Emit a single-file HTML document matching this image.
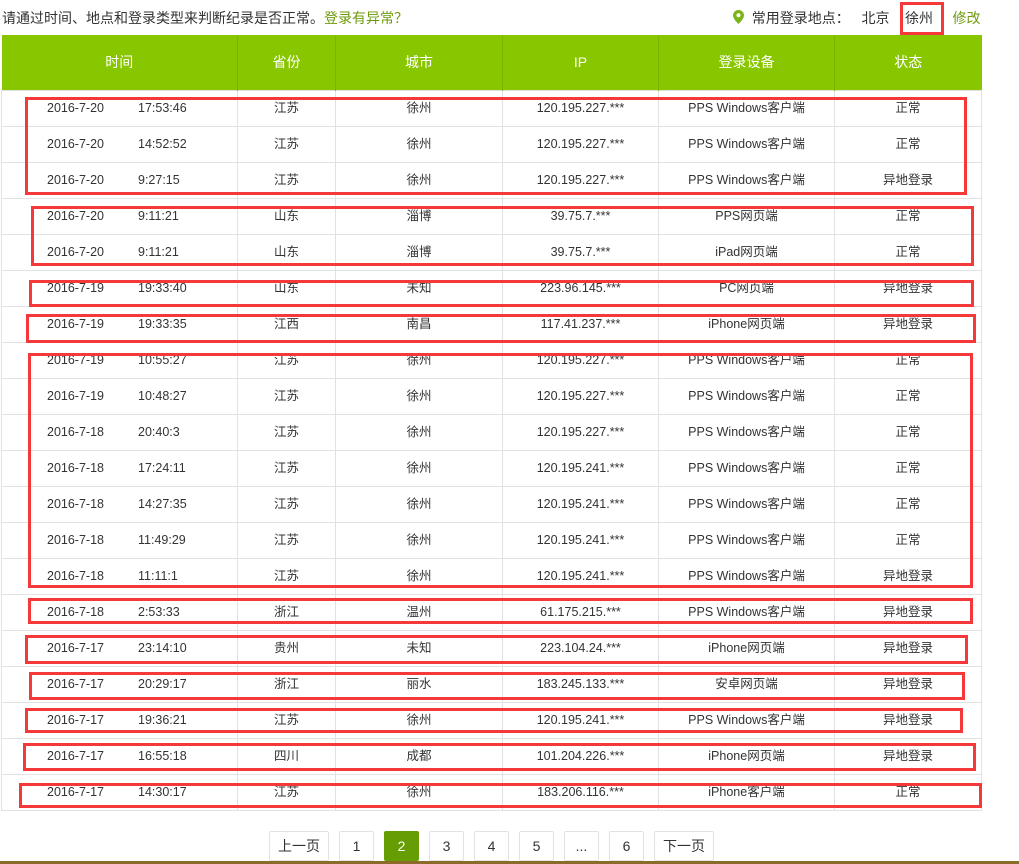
<!DOCTYPE html>
<html><head><meta charset="utf-8"><style>
*{margin:0;padding:0;box-sizing:border-box}
body{width:1019px;height:864px;background:#fff;font-family:"Liberation Sans","Noto Sans CJK SC",sans-serif;font-size:12.5px;color:#333;position:relative;overflow:hidden}
.top{position:absolute;top:8px;left:2px;font-size:14px;color:#333}
.g{color:#6e9a0e}
.loc{position:absolute;top:8px;left:733px;font-size:14px;color:#333;white-space:nowrap}
table{position:absolute;left:1px;top:35px;border-collapse:collapse;table-layout:fixed;width:980px}
th{background:#88c700;color:#fff;font-weight:normal;font-size:14px;height:55px;line-height:18px;border-left:1px solid #7ab300}
th:first-child{border-left:none}
td{height:36px;line-height:16px;text-align:center;border:1px solid #e2e2e2;padding:0;vertical-align:middle}
td.t{text-align:left;padding-left:45px}
td.t span{display:inline-block;width:91px}
.r{position:absolute;border:3px solid #f5383a}
.pg{position:absolute;top:831px;height:30px;border:1px solid #e2e2e2;border-radius:2px;text-align:center;line-height:28px;font-size:14px;color:#333}
.pg.a{background:#659d02;color:#fff;border-color:#659d02}
.bl{position:absolute;left:0;top:861px;width:1019px;height:3px;background:#8b6a2a}
</style></head><body>
<div class="top">请通过时间、地点和登录类型来判断纪录是否正常。<span class="g">登录有异常？</span></div>
<div class="loc"><svg width="11" height="14" viewBox="0 0 11 14" style="vertical-align:-1px"><path d="M5.5 0A5.5 5.5 0 0 0 0 5.5C0 9 5.5 14 5.5 14S11 9 11 5.5A5.5 5.5 0 0 0 5.5 0z" fill="#7cb518"/><circle cx="5.5" cy="5.3" r="2" fill="#fff"/></svg>&nbsp;&nbsp;常用登录地点：&nbsp;&nbsp;&nbsp;北京&nbsp;&nbsp;&nbsp;&nbsp;徐州&nbsp;&nbsp;&nbsp;&nbsp;&nbsp;<span class="g">修改</span></div>
<div class="r" style="left:900px;top:2px;width:44px;height:33px"></div>
<table>
<colgroup><col style="width:236px"><col style="width:98px"><col style="width:167px"><col style="width:156px"><col style="width:176px"><col style="width:147px"></colgroup>
<tr><th>时间</th><th>省份</th><th>城市</th><th>IP</th><th>登录设备</th><th>状态</th></tr>
<tr><td class="t"><span>2016-7-20</span>17:53:46</td><td>江苏</td><td>徐州</td><td>120.195.227.***</td><td>PPS Windows客户端</td><td>正常</td></tr>
<tr><td class="t"><span>2016-7-20</span>14:52:52</td><td>江苏</td><td>徐州</td><td>120.195.227.***</td><td>PPS Windows客户端</td><td>正常</td></tr>
<tr><td class="t"><span>2016-7-20</span>9:27:15</td><td>江苏</td><td>徐州</td><td>120.195.227.***</td><td>PPS Windows客户端</td><td>异地登录</td></tr>
<tr><td class="t"><span>2016-7-20</span>9:11:21</td><td>山东</td><td>淄博</td><td>39.75.7.***</td><td>PPS网页端</td><td>正常</td></tr>
<tr><td class="t"><span>2016-7-20</span>9:11:21</td><td>山东</td><td>淄博</td><td>39.75.7.***</td><td>iPad网页端</td><td>正常</td></tr>
<tr><td class="t"><span>2016-7-19</span>19:33:40</td><td>山东</td><td>未知</td><td>223.96.145.***</td><td>PC网页端</td><td>异地登录</td></tr>
<tr><td class="t"><span>2016-7-19</span>19:33:35</td><td>江西</td><td>南昌</td><td>117.41.237.***</td><td>iPhone网页端</td><td>异地登录</td></tr>
<tr><td class="t"><span>2016-7-19</span>10:55:27</td><td>江苏</td><td>徐州</td><td>120.195.227.***</td><td>PPS Windows客户端</td><td>正常</td></tr>
<tr><td class="t"><span>2016-7-19</span>10:48:27</td><td>江苏</td><td>徐州</td><td>120.195.227.***</td><td>PPS Windows客户端</td><td>正常</td></tr>
<tr><td class="t"><span>2016-7-18</span>20:40:3</td><td>江苏</td><td>徐州</td><td>120.195.227.***</td><td>PPS Windows客户端</td><td>正常</td></tr>
<tr><td class="t"><span>2016-7-18</span>17:24:11</td><td>江苏</td><td>徐州</td><td>120.195.241.***</td><td>PPS Windows客户端</td><td>正常</td></tr>
<tr><td class="t"><span>2016-7-18</span>14:27:35</td><td>江苏</td><td>徐州</td><td>120.195.241.***</td><td>PPS Windows客户端</td><td>正常</td></tr>
<tr><td class="t"><span>2016-7-18</span>11:49:29</td><td>江苏</td><td>徐州</td><td>120.195.241.***</td><td>PPS Windows客户端</td><td>正常</td></tr>
<tr><td class="t"><span>2016-7-18</span>11:11:1</td><td>江苏</td><td>徐州</td><td>120.195.241.***</td><td>PPS Windows客户端</td><td>异地登录</td></tr>
<tr><td class="t"><span>2016-7-18</span>2:53:33</td><td>浙江</td><td>温州</td><td>61.175.215.***</td><td>PPS Windows客户端</td><td>异地登录</td></tr>
<tr><td class="t"><span>2016-7-17</span>23:14:10</td><td>贵州</td><td>未知</td><td>223.104.24.***</td><td>iPhone网页端</td><td>异地登录</td></tr>
<tr><td class="t"><span>2016-7-17</span>20:29:17</td><td>浙江</td><td>丽水</td><td>183.245.133.***</td><td>安卓网页端</td><td>异地登录</td></tr>
<tr><td class="t"><span>2016-7-17</span>19:36:21</td><td>江苏</td><td>徐州</td><td>120.195.241.***</td><td>PPS Windows客户端</td><td>异地登录</td></tr>
<tr><td class="t"><span>2016-7-17</span>16:55:18</td><td>四川</td><td>成都</td><td>101.204.226.***</td><td>iPhone网页端</td><td>异地登录</td></tr>
<tr><td class="t"><span>2016-7-17</span>14:30:17</td><td>江苏</td><td>徐州</td><td>183.206.116.***</td><td>iPhone客户端</td><td>正常</td></tr>
</table>
<div class="r" style="left:25px;top:97px;width:942px;height:98px"></div>
<div class="r" style="left:31px;top:206px;width:943px;height:60px"></div>
<div class="r" style="left:29px;top:280px;width:945px;height:27px"></div>
<div class="r" style="left:26px;top:314px;width:950px;height:29px"></div>
<div class="r" style="left:28px;top:353px;width:945px;height:235px"></div>
<div class="r" style="left:28px;top:598px;width:945px;height:26px"></div>
<div class="r" style="left:25px;top:635px;width:943px;height:29px"></div>
<div class="r" style="left:29px;top:672px;width:936px;height:28px"></div>
<div class="r" style="left:25px;top:708px;width:938px;height:25px"></div>
<div class="r" style="left:23px;top:743px;width:953px;height:28px"></div>
<div class="r" style="left:19px;top:783px;width:963px;height:25px"></div>
<div class="pg" style="left:269px;width:60px">上一页</div>
<div class="pg" style="left:339px;width:35px">1</div>
<div class="pg a" style="left:384px;width:35px">2</div>
<div class="pg" style="left:429px;width:35px">3</div>
<div class="pg" style="left:474px;width:35px">4</div>
<div class="pg" style="left:519px;width:35px">5</div>
<div class="pg" style="left:564px;width:35px">...</div>
<div class="pg" style="left:609px;width:35px">6</div>
<div class="pg" style="left:654px;width:60px">下一页</div>
<div class="bl"></div>
</body></html>
